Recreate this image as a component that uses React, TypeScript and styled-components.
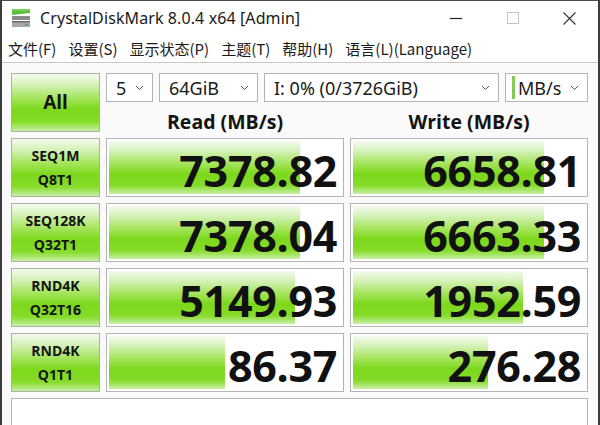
import { FC, Fragment } from "react";
import styled, { createGlobalStyle } from "styled-components";

const GlobalStyle = createGlobalStyle`
  html, body {
    margin: 0;
    padding: 0;
    background: #ffffff;
  }
  body {
    font-family: "Noto Sans", "Noto Sans CJK SC", sans-serif;
  }
`;

const Window = styled.div`
  width: 600px;
  height: 425px;
  box-sizing: border-box;
  border-top: 1px solid #4a4a4a;
  border-left: 2px solid #3c3c3c;
  border-right: 2px solid #3c3c3c;
  background: #fafafa;
  display: flex;
  flex-direction: column;
  overflow: hidden;
`;

const TitleBar = styled.div`
  flex-shrink: 0;
  height: 34px;
  display: flex;
  align-items: center;
  background: #ffffff;
  padding-left: 8px;
`;

const Title = styled.div`
  flex: 1;
  margin-left: 8px;
  font-size: 16px;
  color: #1a1a1a;
  letter-spacing: 0.1px;
`;

const Controls = styled.div`
  display: flex;
  align-items: center;
  height: 100%;
`;

const ControlButton = styled.div`
  width: 57px;
  height: 100%;
  display: flex;
  align-items: center;
  justify-content: center;
`;

const MenuBar = styled.div`
  flex-shrink: 0;
  height: 27px;
  display: flex;
  align-items: center;
  gap: 12px;
  padding-left: 6px;
  background: #ffffff;
  border-bottom: 1px solid #c8c8c8;
  font-family: "Noto Sans CJK SC", "Noto Sans", sans-serif;
  font-size: 15px;
  color: #1a1a1a;
`;

const MenuItem = styled.span`
  line-height: 1;
`;

const Content = styled.div`
  flex-shrink: 0;
  display: grid;
  grid-template-columns: 89px 238px 238px;
  grid-auto-rows: 59px;
  gap: 6px;
  padding: 10px 0 0 9px;
`;

const GreenFill = `
  linear-gradient(
    to bottom,
    #f4fbee 0%,
    #d6f2bb 18%,
    #a6e55e 42%,
    #7dd81c 62%,
    #86dc2a 84%,
    #c9efa7 100%
  )
`;

const LabelBox = styled.div<{ $big?: boolean }>`
  box-sizing: border-box;
  border: 1px solid #a9b3a2;
  background: ${GreenFill};
  display: flex;
  flex-direction: column;
  align-items: center;
  justify-content: center;
  gap: ${(p) => (p.$big ? "0" : "10px")};
  font-family: "Open Sans", "Noto Sans", sans-serif;
  font-weight: 700;
  font-size: ${(p) => (p.$big ? "19px" : "14px")};
  line-height: 1;
  color: #141414;
`;

const TopPanel = styled.div`
  grid-column: 2 / 4;
  display: flex;
  flex-direction: column;
`;

const SelectRow = styled.div`
  display: flex;
  gap: 6px;
  height: 29px;
`;

const Select = styled.div<{ $w: number; $mark?: boolean }>`
  box-sizing: border-box;
  width: ${(p) => p.$w}px;
  height: 29px;
  border: 1px solid #b4b4b4;
  background: #ffffff;
  display: flex;
  align-items: center;
  padding: 0 8px 0 ${(p) => (p.$mark ? "6px" : "9px")};
  font-size: 18px;
  color: #1a1a1a;
`;

const SelectText = styled.span`
  flex: 1;
  line-height: 1;
`;

const Mark = styled.span`
  width: 3px;
  height: 23px;
  background: #86c95a;
  margin-right: 3px;
`;

const Headers = styled.div`
  flex: 1;
  display: grid;
  grid-template-columns: 238px 238px;
  gap: 6px;
  align-items: end;
`;

const Header = styled.div`
  text-align: center;
  font-family: "Open Sans", "Noto Sans", sans-serif;
  font-weight: 700;
  font-size: 19.5px;
  line-height: 1;
  color: #141414;
  padding-bottom: 1px;
`;

const ValueBox = styled.div`
  box-sizing: border-box;
  border: 1px solid #b4b4b4;
  background: #ffffff;
  position: relative;
`;

const Bar = styled.div`
  position: absolute;
  left: 2px;
  top: 2px;
  bottom: 2px;
  background: ${GreenFill};
`;

const Value = styled.div`
  position: relative;
  height: 100%;
  display: flex;
  align-items: center;
  justify-content: flex-end;
  padding: 5px 6px 0 0;
  box-sizing: border-box;
  font-family: "Open Sans", "Noto Sans", sans-serif;
  font-weight: 700;
  font-size: 43px;
  letter-spacing: -0.3px;
  line-height: 1;
  color: #111111;
`;

const Comment = styled.div`
  grid-column: 1 / 4;
  box-sizing: border-box;
  border: 1px solid #b4b4b4;
  background: #ffffff;
  height: 40px;
`;

const Chevron: FC = () => (
  <svg width="9" height="6" viewBox="0 0 9 6">
    <path d="M1 1 L4.5 4.5 L8 1" fill="none" stroke="#555" strokeWidth="1" />
  </svg>
);

const AppIcon: FC = () => (
  <svg width="22" height="22" viewBox="0 0 22 22">
    <path d="M2 2 L20 2 L20 6 L2 8 Z" fill="#5cbf3a" />
    <path d="M2 3 L20 3" stroke="#8fe06a" strokeWidth="1" />
    <rect x="2" y="9" width="18" height="4" fill="#8a8a8a" />
    <rect x="2" y="14" width="18" height="6" fill="#a8a8a8" />
    <rect x="2" y="14" width="18" height="1.5" fill="#6c6c6c" />
    <rect x="15" y="17" width="3" height="1.5" fill="#3fb23a" />
  </svg>
);

interface Row {
  name: string;
  sub: string;
  read: string;
  readPct: number;
  write: string;
  writePct: number;
}

const rows: Row[] = [
  { name: "SEQ1M", sub: "Q8T1", read: "7378.82", readPct: 81, write: "6658.81", writePct: 81 },
  { name: "SEQ128K", sub: "Q32T1", read: "7378.04", readPct: 81, write: "6663.33", writePct: 81 },
  { name: "RND4K", sub: "Q32T16", read: "5149.93", readPct: 79, write: "1952.59", writePct: 72 },
  { name: "RND4K", sub: "Q1T1", read: "86.37", readPct: 49, write: "276.28", writePct: 57 },
];

const ResultCell: FC<{ value: string; pct: number }> = ({ value, pct }) => (
  <ValueBox>
    <Bar style={{ width: `${pct}%` }} />
    <Value>{value}</Value>
  </ValueBox>
);

const menus = ["文件(F)", "设置(S)", "显示状态(P)", "主题(T)", "帮助(H)", "语言(L)(Language)"];

export default function App() {
  return (
    <>
      <GlobalStyle />
      <Window>
        <TitleBar>
          <AppIcon />
          <Title>CrystalDiskMark 8.0.4 x64 [Admin]</Title>
          <Controls>
            <ControlButton>
              <svg width="12" height="12" viewBox="0 0 12 12">
                <path d="M0 6.5 H12" stroke="#222" strokeWidth="1.2" />
              </svg>
            </ControlButton>
            <ControlButton>
              <svg width="12" height="12" viewBox="0 0 12 12">
                <rect x="0.5" y="0.5" width="11" height="11" fill="none" stroke="#c4c4c4" strokeWidth="1" />
              </svg>
            </ControlButton>
            <ControlButton>
              <svg width="13" height="13" viewBox="0 0 13 13">
                <path d="M0.5 0.5 L12.5 12.5 M12.5 0.5 L0.5 12.5" stroke="#333" strokeWidth="1.1" />
              </svg>
            </ControlButton>
          </Controls>
        </TitleBar>
        <MenuBar>
          {menus.map((m) => (
            <MenuItem key={m}>{m}</MenuItem>
          ))}
        </MenuBar>
        <Content>
          <LabelBox $big>All</LabelBox>
          <TopPanel>
            <SelectRow>
              <Select $w={47}>
                <SelectText>5</SelectText>
                <Chevron />
              </Select>
              <Select $w={99}>
                <SelectText>64GiB</SelectText>
                <Chevron />
              </Select>
              <Select $w={235}>
                <SelectText>I: 0% (0/3726GiB)</SelectText>
                <Chevron />
              </Select>
              <Select $w={83} $mark>
                <Mark />
                <SelectText>MB/s</SelectText>
                <Chevron />
              </Select>
            </SelectRow>
            <Headers>
              <Header>Read (MB/s)</Header>
              <Header>Write (MB/s)</Header>
            </Headers>
          </TopPanel>
          {rows.map((r, i) => (
            <Fragment key={i}>
              <LabelBox>
                <span>{r.name}</span>
                <span>{r.sub}</span>
              </LabelBox>
              <ResultCell value={r.read} pct={r.readPct} />
              <ResultCell value={r.write} pct={r.writePct} />
            </Fragment>
          ))}
          <Comment />
        </Content>
      </Window>
    </>
  );
}
